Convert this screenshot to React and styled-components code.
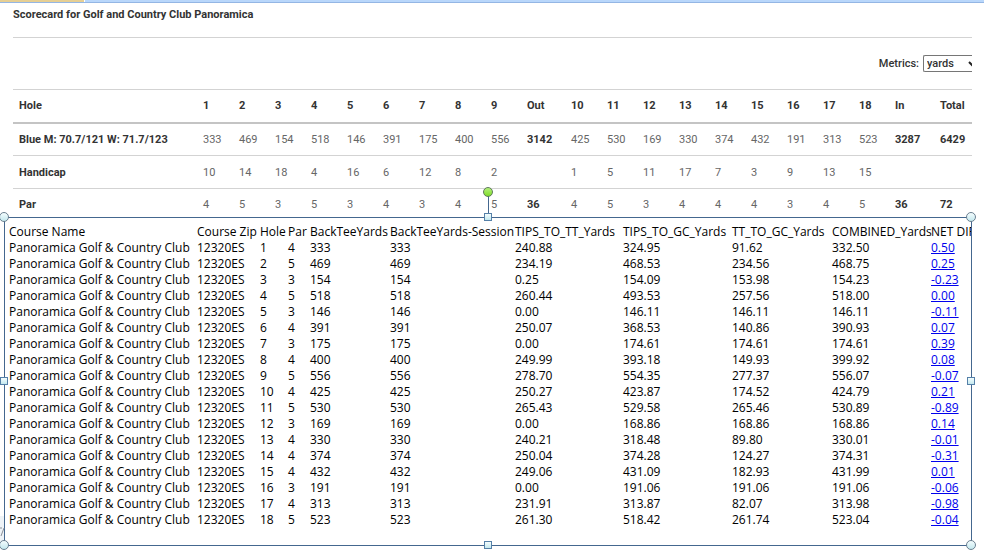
import React from "react";
import styled, { createGlobalStyle } from "styled-components";

const GlobalStyle = createGlobalStyle`
  * {
    box-sizing: border-box;
  }
  body {
    margin: 0;
    background: #fff;
    overflow-x: hidden;
  }
`;

const Page = styled.main`
  padding-bottom: 5px;
  font-family: Roboto, "Liberation Sans", sans-serif;
  font-size: 11px;
  color: #333;
`;

const TopStrip = styled.div`
  display: flex;
  height: 3px;
  background: #b9d7fb;
  border-bottom: 1px solid #94b6e4;
`;

const ActiveTab = styled.div`
  width: 85px;
  height: 2px;
  background: #e6cf94;
  border-right: 1px solid #fff;
`;

const Scorecard = styled.section`
  margin: 0 12px 0 13px;
`;

const Title = styled.h1`
  margin: 0;
  height: 35px;
  padding-top: 4px;
  font-size: 11px;
  line-height: 16px;
  font-weight: 700;
  border-bottom: 1px solid #d3d3d3;
`;

const MetricsBar = styled.div`
  display: flex;
  justify-content: flex-end;
  align-items: center;
  gap: 4px;
  height: 51px;
  overflow: hidden;
  font-weight: 500;
`;

const MetricsSelect = styled.div`
  position: relative;
  width: 49px;
  height: 17px;
  border: 1px solid #767676;
  border-right: 0;
  border-radius: 2px 0 0 2px;
  overflow: hidden;
  select {
    appearance: none;
    display: block;
    width: 100%;
    height: 15px;
    padding: 0 0 0 3px;
    border: 0;
    background: transparent;
    color: #333;
    font: inherit;
  }
  svg {
    position: absolute;
    top: 5px;
    right: -4px;
    pointer-events: none;
  }
`;

const CardTable = styled.table`
  width: 100%;
  table-layout: fixed;
  border-collapse: collapse;
  border-top: 1px solid #d3d3d3;
  th,
  td {
    height: 33px;
    padding: 0 0 0 6px;
    text-align: left;
    white-space: nowrap;
    border-bottom: 1px solid #d3d3d3;
  }
  thead th {
    border-bottom: 2px solid #c4c4c4;
  }
  tbody tr:last-child > * {
    height: 28px;
    padding-top: 3px;
    border-bottom: 0;
  }
`;

const Col = styled.col`
  width: ${(props) => (props.$width ? `${props.$width}px` : "auto")};
`;

const Cell = styled.td`
  font-weight: ${(props) => (props.$total ? 700 : 400)};
  color: ${(props) => (props.$total ? "#333" : "#666")};
`;

const Frame = styled.section`
  position: relative;
  margin: 0 12px 0 4px;
  padding: 6px 0 17px 3px;
  border: 1px solid #44678f;
  background: #fff;
`;

const SheetClip = styled.div`
  overflow: hidden;
`;

const SheetTable = styled.table`
  width: 100%;
  table-layout: fixed;
  border-collapse: collapse;
  font-family: "Open Sans", "Noto Sans", sans-serif;
  font-size: 12px;
  line-height: 16px;
  color: #000;
  th,
  td {
    height: 16px;
    padding: 0 0 0 1px;
    text-align: left;
    font-weight: 400;
    white-space: nowrap;
  }
`;

const DiffLink = styled.a`
  color: #0000ee;
  text-decoration: underline;
`;

const Handle = styled.span`
  position: absolute;
  left: ${(props) => props.$x};
  top: ${(props) => props.$y};
  width: ${(props) => (props.$round ? 10 : 8)}px;
  height: ${(props) => (props.$round ? 10 : 8)}px;
  transform: translate(-50%, -50%);
  border: 1px solid ${(props) => (props.$round ? "#6a7f90" : "#5580a8")};
  border-radius: ${(props) => (props.$round ? "50%" : "0")};
  background: linear-gradient(#f4fdfe, #c4e8ee);
`;

const RotateStem = styled.span`
  position: absolute;
  left: 50%;
  top: -22px;
  width: 1px;
  height: 20px;
  background: #44678f;
`;

const RotateHandle = styled(Handle)`
  border-color: #5d7a5a;
  background: linear-gradient(#b4f07c, #7fdc28);
`;

const EdgeMark = styled.svg`
  position: absolute;
  left: -5px;
  bottom: 3px;
`;

const cardCols = [
  null,
  ...Array(9).fill(36),
  44,
  ...Array(9).fill(36),
  45,
  38,
];

const holes = [
  "1", "2", "3", "4", "5", "6", "7", "8", "9", "Out",
  "10", "11", "12", "13", "14", "15", "16", "17", "18", "In", "Total",
];

const cardRows = [
  {
    label: "Blue M: 70.7/121 W: 71.7/123",
    values: [
      333, 469, 154, 518, 146, 391, 175, 400, 556, 3142,
      425, 530, 169, 330, 374, 432, 191, 313, 523, 3287, 6429,
    ],
  },
  {
    label: "Handicap",
    values: [
      10, 14, 18, 4, 16, 6, 12, 8, 2, "",
      1, 5, 11, 17, 7, 3, 9, 13, 15, "", "",
    ],
  },
  {
    label: "Par",
    values: [
      4, 5, 3, 5, 3, 4, 3, 4, 5, 36,
      4, 5, 3, 4, 4, 4, 3, 4, 5, 36, 72,
    ],
  },
];

const totalColumns = [9, 19, 20];

const sheetCols = [188, 63, 28, 22, 80, 125, 108, 109, 100, 99, null];

const sheetHeads = [
  "Course Name",
  "Course Zip",
  "Hole",
  "Par",
  "BackTeeYards",
  "BackTeeYards-Session",
  "TIPS_TO_TT_Yards",
  "TIPS_TO_GC_Yards",
  "TT_TO_GC_Yards",
  "COMBINED_Yards",
  "NET DIFF",
];

// hole, par, back tee, tips to tt, tips to gc, tt to gc, combined, net diff
const sheetRows = [
  [1, 4, 333, "240.88", "324.95", "91.62", "332.50", "0.50"],
  [2, 5, 469, "234.19", "468.53", "234.56", "468.75", "0.25"],
  [3, 3, 154, "0.25", "154.09", "153.98", "154.23", "-0.23"],
  [4, 5, 518, "260.44", "493.53", "257.56", "518.00", "0.00"],
  [5, 3, 146, "0.00", "146.11", "146.11", "146.11", "-0.11"],
  [6, 4, 391, "250.07", "368.53", "140.86", "390.93", "0.07"],
  [7, 3, 175, "0.00", "174.61", "174.61", "174.61", "0.39"],
  [8, 4, 400, "249.99", "393.18", "149.93", "399.92", "0.08"],
  [9, 5, 556, "278.70", "554.35", "277.37", "556.07", "-0.07"],
  [10, 4, 425, "250.27", "423.87", "174.52", "424.79", "0.21"],
  [11, 5, 530, "265.43", "529.58", "265.46", "530.89", "-0.89"],
  [12, 3, 169, "0.00", "168.86", "168.86", "168.86", "0.14"],
  [13, 4, 330, "240.21", "318.48", "89.80", "330.01", "-0.01"],
  [14, 4, 374, "250.04", "374.28", "124.27", "374.31", "-0.31"],
  [15, 4, 432, "249.06", "431.09", "182.93", "431.99", "0.01"],
  [16, 3, 191, "0.00", "191.06", "191.06", "191.06", "-0.06"],
  [17, 4, 313, "231.91", "313.87", "82.07", "313.98", "-0.98"],
  [18, 5, 523, "261.30", "518.42", "261.74", "523.04", "-0.04"],
];

const HoleTable = () => {
  return (
    <CardTable>
      <colgroup>
        {cardCols.map((width, i) => (
          <Col key={i} $width={width} />
        ))}
      </colgroup>
      <thead>
        <tr>
          <th scope="col">Hole</th>
          {holes.map((hole) => (
            <th scope="col" key={hole}>
              {hole}
            </th>
          ))}
        </tr>
      </thead>
      <tbody>
        {cardRows.map((row) => (
          <tr key={row.label}>
            <th scope="row">{row.label}</th>
            {row.values.map((value, i) => (
              <Cell key={i} $total={totalColumns.includes(i)}>
                {value}
              </Cell>
            ))}
          </tr>
        ))}
      </tbody>
    </CardTable>
  );
};

const YardageSheet = () => {
  return (
    <SheetClip>
      <SheetTable>
        <colgroup>
          {sheetCols.map((width, i) => (
            <Col key={i} $width={width} />
          ))}
        </colgroup>
        <thead>
          <tr>
            {sheetHeads.map((head) => (
              <th scope="col" key={head}>
                {head}
              </th>
            ))}
          </tr>
        </thead>
        <tbody>
          {sheetRows.map(([hole, par, tee, tipsTt, tipsGc, ttGc, sum, diff]) => (
            <tr key={hole}>
              <td>Panoramica Golf &amp; Country Club</td>
              <td>12320ES</td>
              <td>{hole}</td>
              <td>{par}</td>
              <td>{tee}</td>
              <td>{tee}</td>
              <td>{tipsTt}</td>
              <td>{tipsGc}</td>
              <td>{ttGc}</td>
              <td>{sum}</td>
              <td>
                <DiffLink href="#">{diff}</DiffLink>
              </td>
            </tr>
          ))}
        </tbody>
      </SheetTable>
    </SheetClip>
  );
};

const SelectionHandles = () => {
  return (
    <>
      <RotateStem />
      <RotateHandle $round $x="50%" $y="-26px" />
      <Handle $round $x="-1px" $y="-1px" />
      <Handle $x="50%" $y="-1px" />
      <Handle $round $x="100%" $y="-1px" />
      <Handle $x="-1px" $y="50%" />
      <Handle $x="100%" $y="50%" />
      <Handle $round $x="-1px" $y="100%" />
      <Handle $x="50%" $y="100%" />
      <Handle $round $x="100%" $y="100%" />
    </>
  );
};

const App = () => {
  return (
    <Page>
      <GlobalStyle />
      <TopStrip>
        <ActiveTab />
      </TopStrip>
      <Scorecard>
        <Title>Scorecard for Golf and Country Club Panoramica</Title>
        <MetricsBar>
          <label htmlFor="metrics">Metrics:</label>
          <MetricsSelect>
            <select id="metrics" defaultValue="yards">
              <option value="yards">yards</option>
              <option value="meters">meters</option>
            </select>
            <svg width="8" height="6" viewBox="0 0 8 6" fill="none">
              <path d="M1 1L4 4L7 1" stroke="#222" strokeWidth="2" />
            </svg>
          </MetricsSelect>
        </MetricsBar>
        <HoleTable />
      </Scorecard>
      <Frame>
        <YardageSheet />
        <EdgeMark width="5" height="26" viewBox="0 0 5 26">
          <path d="M0 0H4V26H0Z" fill="#eef3f7" />
          <path d="M0 12H2M4 12L1 20" stroke="#8a9099" />
        </EdgeMark>
        <SelectionHandles />
      </Frame>
    </Page>
  );
};

export default App;
